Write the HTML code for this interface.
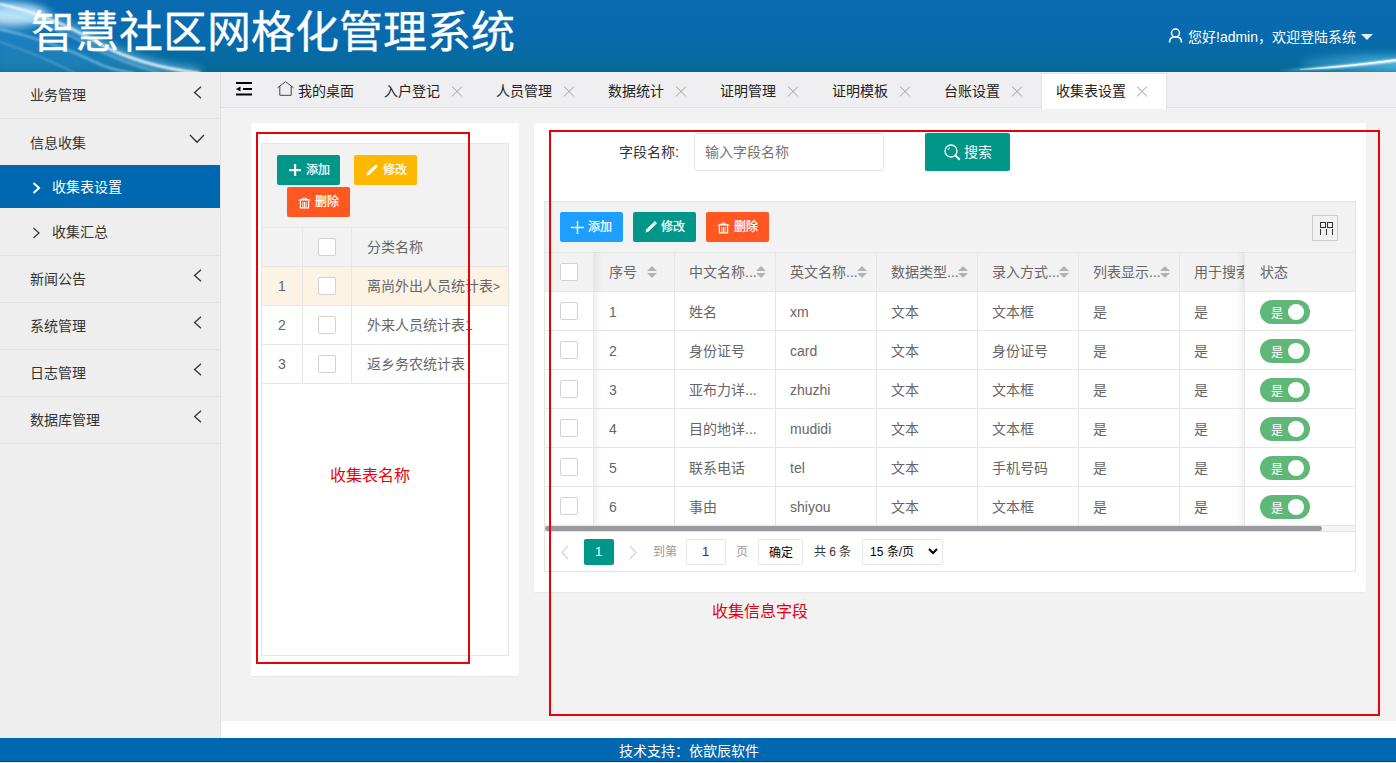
<!DOCTYPE html>
<html lang="zh-CN"><head><meta charset="utf-8">
<style>
*{box-sizing:border-box;margin:0;padding:0}
html,body{width:1396px;height:763px;overflow:hidden}
body{position:relative;background:#f2f2f2;font-family:"Liberation Sans",sans-serif;font-size:14px;color:#333}
.abs{position:absolute}
/* header */
#hdr{left:0;top:0;width:1396px;height:72px;background:linear-gradient(to bottom,#0a6bb1 0%,#076aae 50%,#066a9e 88%,#056892 100%);overflow:hidden}
#title{left:31px;top:5px;-webkit-text-stroke-width:0.3px;font-size:44px;color:#fff;line-height:56px;white-space:nowrap;letter-spacing:0}
#user{left:1188px;top:28px;color:#fff;font-size:14px;line-height:18px;white-space:nowrap}
/* sidebar */
#side{left:0;top:72px;width:221px;height:666px;background:#eeeeee;border-right:1px solid #e2e2e2}
.mi{position:absolute;left:0;width:220px;border-bottom:1px solid #e2e2e2;color:#333;font-size:14px}
.mi span{position:absolute;left:30px;top:14px;line-height:18px;white-space:nowrap}
/* tabs */
#tabs{left:221px;top:72px;width:1175px;height:36px;background:#efeef1;border-bottom:1px solid #e2e2e2}
.tab{position:absolute;top:1px;height:36px;line-height:36px;color:#222;white-space:nowrap}
.x{position:absolute;top:14px;width:10px;height:10px}
.x:before,.x:after{content:"";position:absolute;left:-2px;top:4.5px;width:14px;height:1px;background:#b5b5b5;transform:rotate(45deg)}
.x:after{transform:rotate(-45deg)}
/* content */
#content{left:221px;top:108px;width:1175px;height:612px}
#whitebar{left:221px;top:721px;width:1175px;height:17px;background:#fff}
#foot{left:0;top:738px;width:1396px;height:23px;background:#0068b0;color:#fff}
#foot span{position:absolute;left:619px;top:5px;line-height:17px;font-size:14px;white-space:nowrap}
#bot{left:0;top:761px;width:1396px;height:2px;background:#dfe6ec;border-top:1px solid #23415e}

.card{position:absolute;background:#fff;border-radius:2px;box-shadow:0 1px 2px 0 rgba(0,0,0,.05)}
.bx{position:absolute}
.hl{position:absolute;height:1px;background:#e6e6e6}
.vl{position:absolute;width:1px;background:#e6e6e6}
.t{position:absolute;white-space:nowrap;line-height:18px;font-size:14px;color:#666}
.cb{position:absolute;width:18px;height:18px;border:1px solid #d2d2d2;border-radius:2px;background:#fff}
.btn{position:absolute;height:30px;width:63px;border-radius:2px;color:#fff;font-size:12px}
.btn span{position:absolute;top:6px;line-height:18px;white-space:nowrap;-webkit-text-stroke-width:0.25px}
.btn svg{position:absolute}
.sort{position:absolute;width:10px;height:12px}
.sort:before{content:"";position:absolute;left:0;top:0;border-left:5px solid transparent;border-right:5px solid transparent;border-bottom:5px solid #b2b2b2}
.sort:after{content:"";position:absolute;left:0;top:7px;border-left:5px solid transparent;border-right:5px solid transparent;border-top:5px solid #b2b2b2}
.sw{position:absolute;left:1260px;width:50px;height:24px;border-radius:12px;background:#5fb878}
.sw:after{content:"";position:absolute;left:28px;top:4px;width:16px;height:16px;border-radius:50%;background:#fff}
.sw span{position:absolute;left:11px;top:4.5px;line-height:18px;font-size:12px;color:#fff}
.red{position:absolute;border:2px solid #e8000b}
.note{position:absolute;color:#e8000b;font-size:16px;line-height:20px;white-space:nowrap}
</style></head><body>
<div id="hdr" class="abs">
<svg class="abs" style="left:0;top:0" width="1396" height="72" viewBox="0 0 1396 72">
  <defs>
    <filter id="b1" x="-50%" y="-50%" width="200%" height="200%"><feGaussianBlur stdDeviation="1.2"/></filter>
    <filter id="b3" x="-50%" y="-50%" width="200%" height="200%"><feGaussianBlur stdDeviation="4"/></filter>
    <filter id="b6" x="-50%" y="-50%" width="200%" height="200%"><feGaussianBlur stdDeviation="8"/></filter>
  </defs>
  <path d="M-5 22 Q 60 36 110 58 Q 145 70 190 73 L -5 73 Z" fill="#3d9fd8" opacity="0.4" filter="url(#b3)"/>
  <ellipse cx="14" cy="15" rx="34" ry="11" fill="#d8f4ff" opacity="0.85" filter="url(#b3)"/>
  <path d="M-5 3 Q 50 14 100 44 Q 140 66 200 73" fill="none" stroke="#9fe0ff" stroke-width="8" opacity="0.6" filter="url(#b3)"/>
  <path d="M-5 3 Q 50 14 100 44 Q 140 66 200 73" fill="none" stroke="#ffffff" stroke-width="2" opacity="1" filter="url(#b1)"/>
  <path d="M-5 12 Q 50 24 90 46 Q 120 62 160 73" fill="none" stroke="#c0ecff" stroke-width="1.2" opacity="0.6" filter="url(#b1)"/>
  <path d="M-5 28 Q 50 40 95 62 Q 110 70 135 73" fill="none" stroke="#b0e6ff" stroke-width="1.5" opacity="0.7" filter="url(#b1)"/>
  <path d="M-5 40 Q 40 55 75 73" fill="none" stroke="#9ad8f8" stroke-width="1.2" opacity="0.5" filter="url(#b1)"/>
  <linearGradient id="sg" x1="1280" y1="0" x2="1396" y2="0" gradientUnits="userSpaceOnUse"><stop offset="0" stop-color="#dff6ff" stop-opacity="0"/><stop offset="0.45" stop-color="#eefaff" stop-opacity="0.9"/><stop offset="1" stop-color="#ffffff" stop-opacity="1"/></linearGradient>
  <linearGradient id="hg" x1="1228" y1="0" x2="1396" y2="0" gradientUnits="userSpaceOnUse"><stop offset="0" stop-color="#3aa0d0" stop-opacity="0"/><stop offset="1" stop-color="#60c8f0" stop-opacity="0.75"/></linearGradient>
  <ellipse cx="1370" cy="64" rx="70" ry="9" fill="url(#hg)" filter="url(#b3)"/>
  <path d="M1270 71 Q 1330 69 1400 60" fill="none" stroke="url(#sg)" stroke-width="2.5" filter="url(#b1)"/>
  <path d="M1300 69.5 Q 1345 67 1400 59.5" fill="none" stroke="url(#sg)" stroke-width="1.6"/>
</svg>
  <div id="title" class="abs">智慧社区网格化管理系统</div>
  <svg class="abs" style="left:1168px;top:28px" width="15" height="15" viewBox="0 0 15 15"><circle cx="7.5" cy="5" r="4" fill="none" stroke="#fff" stroke-width="1.5"/><path d="M1.5 14.5 C1.5 10.5 4 8.8 7.5 8.8 C11 8.8 13.5 10.5 13.5 14.5" fill="none" stroke="#fff" stroke-width="1.5"/></svg>
  <svg class="abs" style="left:1361px;top:34px" width="12" height="6" viewBox="0 0 12 6"><path d="M0 0 L12 0 L6 6 Z" fill="#e8eef5"/></svg>
  <div id="user" class="abs">您好!admin，欢迎登陆系统</div>
</div>
<div id="side" class="abs">
  <div class="mi" style="top:0;height:47px"><span>业务管理</span></div>
  <div class="mi" style="top:47px;height:46px;border:0"><span style="top:15px">信息收集</span></div>
  <div class="mi" style="top:93px;height:43px;border:0;background:#0068b0;color:#fff"><span style="left:52px;top:13px">收集表设置</span></div>
  <div class="mi" style="top:136px;height:48px"><span style="left:52px;top:15px">收集汇总</span></div>
  <div class="mi" style="top:184px;height:47px"><span>新闻公告</span></div>
  <div class="mi" style="top:231px;height:47px"><span>系统管理</span></div>
  <div class="mi" style="top:278px;height:47px"><span>日志管理</span></div>
  <div class="mi" style="top:325px;height:47px"><span>数据库管理</span></div>
</div>
<svg class="abs" style="left:193px;top:86px" width="9" height="13" viewBox="0 0 9 13"><path d="M8 0.7 L1.6 6.5 L8 12.3" fill="none" stroke="#333" stroke-width="1.3"/></svg><svg class="abs" style="left:193px;top:269px" width="9" height="13" viewBox="0 0 9 13"><path d="M8 0.7 L1.6 6.5 L8 12.3" fill="none" stroke="#333" stroke-width="1.3"/></svg><svg class="abs" style="left:193px;top:316px" width="9" height="13" viewBox="0 0 9 13"><path d="M8 0.7 L1.6 6.5 L8 12.3" fill="none" stroke="#333" stroke-width="1.3"/></svg><svg class="abs" style="left:193px;top:363px" width="9" height="13" viewBox="0 0 9 13"><path d="M8 0.7 L1.6 6.5 L8 12.3" fill="none" stroke="#333" stroke-width="1.3"/></svg><svg class="abs" style="left:193px;top:410px" width="9" height="13" viewBox="0 0 9 13"><path d="M8 0.7 L1.6 6.5 L8 12.3" fill="none" stroke="#333" stroke-width="1.3"/></svg><svg class="abs" style="left:189px;top:134px" width="16" height="10" viewBox="0 0 16 10"><path d="M1 1 L8 8.3 L15 1" fill="none" stroke="#333" stroke-width="1.3"/></svg><svg class="abs" style="left:32px;top:182px" width="9" height="12" viewBox="0 0 9 12"><path d="M1.5 1 L7 6 L1.5 11" fill="none" stroke="#fff" stroke-width="2"/></svg><svg class="abs" style="left:32px;top:227px" width="9" height="12" viewBox="0 0 9 12"><path d="M1.5 1 L7 6 L1.5 11" fill="none" stroke="#333" stroke-width="1.2"/></svg>
<div id="tabs" class="abs">
  <svg class="abs" style="left:15px;top:10px" width="16" height="14" viewBox="0 0 16 14"><rect x="0" y="0" width="16" height="2" fill="#000"/><rect x="7" y="6" width="9" height="2" fill="#000"/><rect x="0" y="11.5" width="16" height="2" fill="#000"/><path d="M0 7 L4.5 4.5 L4.5 9.5 Z" fill="#000"/></svg>
  <svg class="abs" style="left:56px;top:9px" width="17" height="15" viewBox="0 0 17 15"><path d="M0.5 6.8 L8.5 0.7 L16.5 6.8 M2.8 5.2 L2.8 14.3 L14.2 14.3 L14.2 5.2" fill="none" stroke="#444" stroke-width="1"/></svg>
  <div class="tab" style="left:77px">我的桌面</div>
  <div class="tab" style="left:163px">入户登记</div><div class="x" style="left:231px"></div>
  <div class="tab" style="left:275px">人员管理</div><div class="x" style="left:343px"></div>
  <div class="tab" style="left:387px">数据统计</div><div class="x" style="left:455px"></div>
  <div class="tab" style="left:499px">证明管理</div><div class="x" style="left:567px"></div>
  <div class="tab" style="left:611px">证明模板</div><div class="x" style="left:679px"></div>
  <div class="tab" style="left:723px">台账设置</div><div class="x" style="left:791px"></div>
  <div class="abs" style="left:820px;top:1px;width:126px;height:36px;background:#fff;border:1px solid #e2e2e2;border-bottom:0;z-index:2"></div>
  <div class="tab" style="left:835px;z-index:3">收集表设置</div><div class="x" style="left:916px;z-index:3"></div>
</div>
<div id="content" class="abs"></div>
<!-- left card -->
<div class="card" style="left:251px;top:123px;width:268px;height:553px"></div>
<div class="bx" style="left:261px;top:143px;width:248px;height:513px;border:1px solid #e6e6e6;background:#fff"></div>
<div class="bx" style="left:262px;top:144px;width:246px;height:122px;background:#f2f2f2"></div>
<div class="bx" style="left:262px;top:266px;width:246px;height:39px;background:#fdf3e5"></div>
<div class="hl" style="left:262px;top:227px;width:246px"></div>
<div class="hl" style="left:262px;top:266px;width:246px"></div>
<div class="hl" style="left:262px;top:305px;width:246px"></div>
<div class="hl" style="left:262px;top:344px;width:246px"></div>
<div class="hl" style="left:262px;top:383px;width:246px"></div>
<div class="vl" style="left:302px;top:227px;height:156px"></div>
<div class="vl" style="left:351px;top:227px;height:156px"></div>
<div class="btn" style="left:277px;top:155px;background:#009688"><svg style="left:12px;top:9px" width="12" height="12" viewBox="0 0 12 12"><rect x="5" y="0" width="2.2" height="12" fill="#fff"/><rect x="0" y="5" width="12" height="2.2" fill="#fff"/></svg><span style="left:29px">添加</span></div>
<div class="btn" style="left:354px;top:155px;background:#ffb800"><svg style="left:12px;top:9px" width="12" height="12" viewBox="0 0 12 12"><path d="M0.5 11.5 L1.2 8.6 L8.6 1.2 L10.8 3.4 L3.4 10.8 Z" fill="#fff"/><path d="M9.3 0.5 L11.5 2.7" stroke="#fff" stroke-width="1.4"/></svg><span style="left:29px">修改</span></div>
<div class="btn" style="left:287px;top:187px;background:#ff5722"><svg style="left:11px;top:10px" width="13" height="12" viewBox="0 0 13 12"><path d="M0 3.4 C 1.5 1.2, 11.5 1.2, 13 3.4 Z" fill="#fff"/><path d="M4.3 1.6 Q 6.5 0 8.7 1.6" fill="none" stroke="#fff" stroke-width="1"/><path d="M2.4 3.6 V10.9 H10.6 V3.6" fill="none" stroke="#fff" stroke-width="1.2"/><rect x="4.4" y="5" width="0.9" height="5" fill="#fff"/><rect x="6.05" y="5" width="0.9" height="5" fill="#fff"/><rect x="7.7" y="5" width="0.9" height="5" fill="#fff"/></svg><span style="left:28px">删除</span></div>
<div class="cb" style="left:318px;top:238px"></div>
<div class="cb" style="left:318px;top:277px"></div>
<div class="cb" style="left:318px;top:316px"></div>
<div class="cb" style="left:318px;top:355px"></div>
<div class="t" style="left:367px;top:238px">分类名称</div>
<div class="t" style="left:278px;top:277px">1</div>
<div class="t" style="left:278px;top:316px">2</div>
<div class="t" style="left:278px;top:355px">3</div>
<div class="t" style="left:367px;top:277px">离尚外出人员统计表<span style="font-size:12px">&gt;</span></div>
<div class="t" style="left:367px;top:316px">外来人员统计表1</div>
<div class="t" style="left:367px;top:355px">返乡务农统计表</div>
<div class="red" style="left:256px;top:132px;width:214px;height:532px"></div>
<div class="note" style="left:330px;top:466px">收集表名称</div>

<!-- right card -->
<div class="card" style="left:534px;top:123px;width:832px;height:469px"></div>
<div class="t" style="left:619px;top:143px;color:#333">字段名称:</div>
<div class="bx" style="left:694px;top:133px;width:190px;height:38px;border:1px solid #e6e6e6;border-radius:2px;background:#fff"></div>
<div class="t" style="left:705px;top:143px;color:#757575">输入字段名称</div>
<div class="bx" style="left:925px;top:133px;width:85px;height:38px;border-radius:2px;background:#009688"></div>
<svg class="bx" style="left:944px;top:144px" width="17" height="17" viewBox="0 0 17 17"><circle cx="7" cy="7" r="6" fill="none" stroke="#fff" stroke-width="1.3"/><path d="M11.2 11.2 L15.8 15.8" stroke="#fff" stroke-width="2"/><path d="M4 6 A3.2 3.2 0 0 1 6 3.6" fill="none" stroke="#fff" stroke-width="1"/></svg>
<div class="t" style="left:964px;top:143px;color:#fff">搜索</div>

<div class="bx" style="left:544px;top:201px;width:812px;height:371px;border:1px solid #e6e6e6;background:#fff"></div>
<div class="bx" style="left:545px;top:202px;width:810px;height:89px;background:#f2f2f2"></div>
<div class="hl" style="left:545px;top:252px;width:810px"></div>
<div class="btn" style="left:560px;top:212px;background:#1e9fff"><svg style="left:11px;top:9px" width="13" height="13" viewBox="0 0 13 13"><rect x="5.8" y="0" width="1.4" height="13" fill="#fff"/><rect x="0" y="5.8" width="13" height="1.4" fill="#fff"/></svg><span style="left:28px">添加</span></div>
<div class="btn" style="left:633px;top:212px;background:#009688"><svg style="left:12px;top:9px" width="12" height="12" viewBox="0 0 12 12"><path d="M0.5 11.5 L1.2 8.6 L8.6 1.2 L10.8 3.4 L3.4 10.8 Z" fill="#fff"/><path d="M9.3 0.5 L11.5 2.7" stroke="#fff" stroke-width="1.4"/></svg><span style="left:28px">修改</span></div>
<div class="btn" style="left:706px;top:212px;background:#ff5722"><svg style="left:11px;top:10px" width="13" height="12" viewBox="0 0 13 12"><path d="M0 3.4 C 1.5 1.2, 11.5 1.2, 13 3.4 Z" fill="#fff"/><path d="M4.3 1.6 Q 6.5 0 8.7 1.6" fill="none" stroke="#fff" stroke-width="1"/><path d="M2.4 3.6 V10.9 H10.6 V3.6" fill="none" stroke="#fff" stroke-width="1.2"/><rect x="4.4" y="5" width="0.9" height="5" fill="#fff"/><rect x="6.05" y="5" width="0.9" height="5" fill="#fff"/><rect x="7.7" y="5" width="0.9" height="5" fill="#fff"/></svg><span style="left:28px">删除</span></div>
<div class="bx" style="left:1312px;top:215px;width:26px;height:26px;border:1px solid #cccccc"></div>
<svg class="bx" style="left:1320px;top:222px" width="13" height="13" viewBox="0 0 13 13"><rect x="0.5" y="0.5" width="5" height="5" fill="none" stroke="#333" stroke-width="1"/><rect x="7.5" y="0.5" width="5" height="5" fill="none" stroke="#333" stroke-width="1"/><rect x="0" y="7" width="1" height="6" fill="#333"/><rect x="6" y="7" width="1" height="6" fill="#333"/><rect x="12" y="7" width="1" height="6" fill="#333"/></svg>
<div class="hl" style="left:545px;top:291px;width:810px"></div>
<div class="hl" style="left:545px;top:330px;width:810px"></div>
<div class="hl" style="left:545px;top:369px;width:810px"></div>
<div class="hl" style="left:545px;top:408px;width:810px"></div>
<div class="hl" style="left:545px;top:447px;width:810px"></div>
<div class="hl" style="left:545px;top:486px;width:810px"></div>
<div class="hl" style="left:545px;top:525px;width:810px"></div>
<div class="vl" style="left:593px;top:252px;height:273px"></div>
<div class="vl" style="left:674px;top:252px;height:273px"></div>
<div class="vl" style="left:775px;top:252px;height:273px"></div>
<div class="vl" style="left:876px;top:252px;height:273px"></div>
<div class="vl" style="left:977px;top:252px;height:273px"></div>
<div class="vl" style="left:1078px;top:252px;height:273px"></div>
<div class="vl" style="left:1179px;top:252px;height:273px"></div>
<div class="vl" style="left:1244px;top:252px;height:273px"></div>
<div class="bx" style="left:594px;top:252px;width:8px;height:273px;background:linear-gradient(to right,rgba(0,0,0,0.05),rgba(0,0,0,0))"></div>
<div class="bx" style="left:1236px;top:252px;width:8px;height:273px;background:linear-gradient(to left,rgba(0,0,0,0.05),rgba(0,0,0,0))"></div>
<div class="cb" style="left:560px;top:263px"></div>
<div class="t" style="left:609px;top:263px">序号</div><div class="sort" style="left:647px;top:266px"></div>
<div class="t" style="left:689px;top:263px">中文名称...</div><div class="sort" style="left:756px;top:266px"></div>
<div class="t" style="left:790px;top:263px">英文名称...</div><div class="sort" style="left:857px;top:266px"></div>
<div class="t" style="left:891px;top:263px">数据类型...</div><div class="sort" style="left:958px;top:266px"></div>
<div class="t" style="left:992px;top:263px">录入方式...</div><div class="sort" style="left:1059px;top:266px"></div>
<div class="t" style="left:1093px;top:263px">列表显示...</div><div class="sort" style="left:1160px;top:266px"></div>
<div class="bx" style="left:1180px;top:253px;width:64px;height:38px;overflow:hidden"><div class="t" style="left:14px;top:10px">用于搜索</div></div>
<div class="t" style="left:1260px;top:263px">状态</div>
<div class="cb" style="left:560px;top:302px"></div>
<div class="t" style="left:609px;top:303px">1</div><div class="t" style="left:689px;top:303px">姓名</div><div class="t" style="left:790px;top:303px">xm</div><div class="t" style="left:891px;top:303px">文本</div><div class="t" style="left:992px;top:303px">文本框</div><div class="t" style="left:1093px;top:303px">是</div><div class="t" style="left:1194px;top:303px">是</div><div class="sw" style="top:300px"><span>是</span></div>
<div class="cb" style="left:560px;top:341px"></div>
<div class="t" style="left:609px;top:342px">2</div><div class="t" style="left:689px;top:342px">身份证号</div><div class="t" style="left:790px;top:342px">card</div><div class="t" style="left:891px;top:342px">文本</div><div class="t" style="left:992px;top:342px">身份证号</div><div class="t" style="left:1093px;top:342px">是</div><div class="t" style="left:1194px;top:342px">是</div><div class="sw" style="top:339px"><span>是</span></div>
<div class="cb" style="left:560px;top:380px"></div>
<div class="t" style="left:609px;top:381px">3</div><div class="t" style="left:689px;top:381px">亚布力详...</div><div class="t" style="left:790px;top:381px">zhuzhi</div><div class="t" style="left:891px;top:381px">文本</div><div class="t" style="left:992px;top:381px">文本框</div><div class="t" style="left:1093px;top:381px">是</div><div class="t" style="left:1194px;top:381px">是</div><div class="sw" style="top:378px"><span>是</span></div>
<div class="cb" style="left:560px;top:419px"></div>
<div class="t" style="left:609px;top:420px">4</div><div class="t" style="left:689px;top:420px">目的地详...</div><div class="t" style="left:790px;top:420px">mudidi</div><div class="t" style="left:891px;top:420px">文本</div><div class="t" style="left:992px;top:420px">文本框</div><div class="t" style="left:1093px;top:420px">是</div><div class="t" style="left:1194px;top:420px">是</div><div class="sw" style="top:417px"><span>是</span></div>
<div class="cb" style="left:560px;top:458px"></div>
<div class="t" style="left:609px;top:459px">5</div><div class="t" style="left:689px;top:459px">联系电话</div><div class="t" style="left:790px;top:459px">tel</div><div class="t" style="left:891px;top:459px">文本</div><div class="t" style="left:992px;top:459px">手机号码</div><div class="t" style="left:1093px;top:459px">是</div><div class="t" style="left:1194px;top:459px">是</div><div class="sw" style="top:456px"><span>是</span></div>
<div class="cb" style="left:560px;top:497px"></div>
<div class="t" style="left:609px;top:498px">6</div><div class="t" style="left:689px;top:498px">事由</div><div class="t" style="left:790px;top:498px">shiyou</div><div class="t" style="left:891px;top:498px">文本</div><div class="t" style="left:992px;top:498px">文本框</div><div class="t" style="left:1093px;top:498px">是</div><div class="t" style="left:1194px;top:498px">是</div><div class="sw" style="top:495px"><span>是</span></div>
<div class="bx" style="left:545px;top:526px;width:810px;height:5px;background:#f5f5f5"></div>
<div class="bx" style="left:545px;top:526px;width:777px;height:5px;border-radius:3px;background:#9a9b9f"></div>
<div class="hl" style="left:545px;top:531px;width:810px"></div>
<svg class="bx" style="left:560px;top:545px" width="10" height="15" viewBox="0 0 10 15"><path d="M8 1 L2 7.5 L8 14" fill="none" stroke="#d2d2d2" stroke-width="1.2"/></svg>
<div class="bx" style="left:584px;top:539px;width:30px;height:26px;border-radius:2px;background:#009688"></div>
<div class="t" style="left:595px;top:543px;color:#fff;font-size:13px">1</div>
<svg class="bx" style="left:628px;top:545px" width="10" height="15" viewBox="0 0 10 15"><path d="M2 1 L8 7.5 L2 14" fill="none" stroke="#d2d2d2" stroke-width="1.2"/></svg>
<div class="t" style="left:653px;top:543px;color:#999;font-size:12px">到第</div>
<div class="bx" style="left:686px;top:539px;width:40px;height:26px;border:1px solid #e6e6e6;border-radius:2px"></div>
<div class="t" style="left:702px;top:543px;color:#333;font-size:13px">1</div>
<div class="t" style="left:736px;top:543px;color:#999;font-size:12px">页</div>
<div class="bx" style="left:758px;top:539px;width:45px;height:26px;border:1px solid #e6e6e6;border-radius:2px"></div>
<div class="t" style="left:769px;top:544px;color:#000;font-size:12px">确定</div>
<div class="t" style="left:814px;top:543px;color:#333;font-size:12px">共 6 条</div>
<div class="bx" style="left:862px;top:539px;width:81px;height:26px;border:1px solid #e6e6e6;border-radius:2px"></div>
<div class="t" style="left:870px;top:543px;color:#000;font-size:12px">15 条/页</div>
<svg class="bx" style="left:928px;top:548px" width="10" height="7" viewBox="0 0 10 7"><path d="M1 1 L5 5 L9 1" fill="none" stroke="#000" stroke-width="2"/></svg>
<div class="red" style="left:549px;top:130px;width:831px;height:586px"></div>
<div class="note" style="left:712px;top:602px">收集信息字段</div>

<div id="whitebar" class="abs"></div>
<div id="foot" class="abs"><span>技术支持：依歆辰软件</span></div>
<div id="bot" class="abs"></div>
</body></html>
